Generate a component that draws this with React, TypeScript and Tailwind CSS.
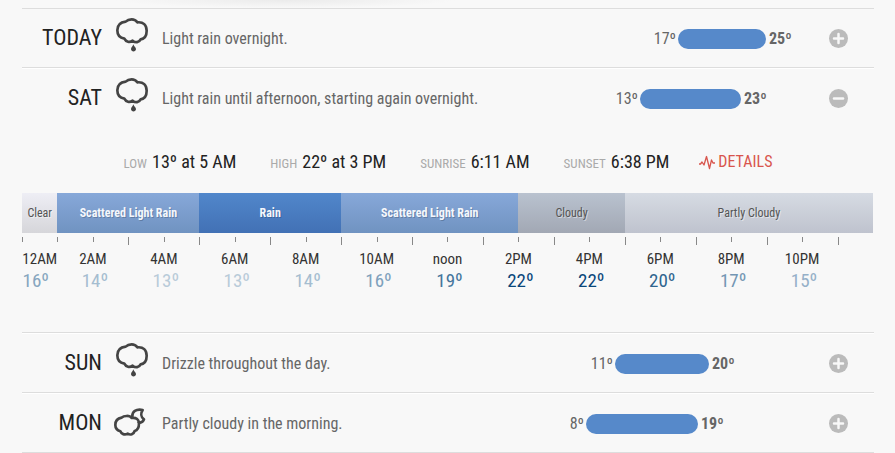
import { useState } from "react";

type Icon = "rain" | "partly-cloudy-night";

type Day = {
  name: string;
  icon: Icon;
  text: string;
  low: number;
  high: number;
  start: number;
  span: number;
};

const days: Day[] = [
  { name: "TODAY", icon: "rain", text: "Light rain overnight.", low: 17, high: 25, start: 118, span: 88 },
  { name: "SAT", icon: "rain", text: "Light rain until afternoon, starting again overnight.", low: 13, high: 23, start: 80, span: 101 },
  { name: "SUN", icon: "rain", text: "Drizzle throughout the day.", low: 11, high: 20, start: 55, span: 94 },
  { name: "MON", icon: "partly-cloudy-night", text: "Partly cloudy in the morning.", low: 8, high: 19, start: 26, span: 112 },
];

const facts = [
  { label: "LOW", value: "13º at 5 AM" },
  { label: "HIGH", value: "22º at 3 PM" },
  { label: "SUNRISE", value: "6:11 AM" },
  { label: "SUNSET", value: "6:38 PM" },
];

const darkText = "text-[#555] [text-shadow:1px_1px_0_rgba(255,255,255,0.5)]";
const lightText = "font-bold text-[#f4f7fc] [text-shadow:1px_1px_0_rgba(0,0,0,0.2)]";

const conditions = [
  { label: "Clear", style: `col-span-1 from-[#eeeef5] to-[#d6d6da] ${darkText}` },
  { label: "Scattered Light Rain", style: `col-span-4 from-[#87a8d9] to-[#7093c1] ${lightText}` },
  { label: "Rain", style: `col-span-4 from-[#5187cb] to-[#4271b5] ${lightText}` },
  { label: "Scattered Light Rain", style: `col-span-5 from-[#87a8d9] to-[#7093c1] ${lightText}` },
  { label: "Cloudy", style: `col-span-3 from-[#b9c2cf] to-[#a2a8b4] ${darkText}` },
  { label: "Partly Cloudy", style: `col-span-7 from-[#d6dbe3] to-[#bfc3ce] ${darkText}` },
];

const hours = [
  { time: "12AM", temp: 16, color: "text-[#86a6bf]" },
  { time: "2AM", temp: 14, color: "text-[#a5bdd0]" },
  { time: "4AM", temp: 13, color: "text-[#b8cbd9]" },
  { time: "6AM", temp: 13, color: "text-[#b8cbd9]" },
  { time: "8AM", temp: 14, color: "text-[#a5bdd0]" },
  { time: "10AM", temp: 16, color: "text-[#7fa1bc]" },
  { time: "noon", temp: 19, color: "text-[#44759c]" },
  { time: "2PM", temp: 22, color: "text-[#0a477b]" },
  { time: "4PM", temp: 22, color: "text-[#0a477b]" },
  { time: "6PM", temp: 20, color: "text-[#2f658f]" },
  { time: "8PM", temp: 17, color: "text-[#7396b3]" },
  { time: "10PM", temp: 15, color: "text-[#95b0c8]" },
];

function WeatherIcon({ icon }: { icon: Icon }) {
  if (icon === "rain") {
    return (
      <svg className="mb-2 ml-[11px] h-9 w-9 shrink-0" viewBox="24 36 108 108" fill="none" stroke="#444" strokeWidth="8" strokeLinejoin="round" aria-hidden="true">
        <path d="M62 50C67 45 73 43 80 43C87 43 93 46 97 52C115 50 125 60 125 77C125 91 118 101 107 103C103 113 91 114 83 107C74 114 63 111 58 101C44 99 37 90 37 76C37 61 46 52 62 50Z" />
        <path d="M85 118C84 124 78 127 78 132C78 142 93 142 93 132C93 127 86 124 85 118Z" fill="#444" stroke="none" />
      </svg>
    );
  }
  return (
    <svg className="mb-2 ml-[11px] h-9 w-9 shrink-0" viewBox="24 21 108 108" fill="none" stroke="#444" strokeWidth="8" strokeLinejoin="round" strokeLinecap="round" aria-hidden="true">
      <path d="M50 68C56 62 74 60 80 69C94 67 102 74 102 85C102 97 97 106 89 108C86 118 76 121 68 116C59 121 49 117 46 109C37 106 31 99 31 90C31 78 38 70 50 68Z" />
      <path d="M82 65C81 50 93 41 113 45C107 54 107 66 117 73C114 81 108 84 101 82" />
    </svg>
  );
}

function TemperatureRange({ day }: { day: Day }) {
  return (
    <div className="flex w-[248px] shrink-0 items-center text-base leading-5 text-[#666]">
      <span className="shrink-0 pr-0.5 text-right" style={{ width: day.start }}>{day.low}º</span>
      <span className="h-5 shrink-0 rounded-full bg-[#5689ca]" style={{ width: day.span }} />
      <span className="pl-[3px] font-bold">{day.high}º</span>
    </div>
  );
}

function DayDetails() {
  return (
    <div className="pt-[21px] pb-[41px]">
      <div className="mb-[17px] flex h-7 items-center justify-center gap-[34px] whitespace-nowrap">
        {facts.map((fact) => (
          <dl key={fact.label} className="flex items-baseline gap-[5px]">
            <dt className="text-[13px] text-[#aaa]">{fact.label}</dt>
            <dd className="text-lg text-[#222]">{fact.value}</dd>
          </dl>
        ))}
        <a href="#details" className="-ml-1 flex items-center gap-[3px] text-base text-[#d8554d]">
          <svg className="h-4 w-4" viewBox="0 0 16 16" fill="none" stroke="currentColor" strokeWidth="1.3" strokeLinejoin="round" aria-hidden="true">
            <path d="M0 10H1.500L3 8L5 11L7.500 2.500L10.500 14.500L12.500 6L14 9H16" />
          </svg>
          DETAILS
        </a>
      </div>
      <div className="mr-px">
        <div className="grid h-10 grid-cols-24 text-xs">
          {conditions.map((condition, i) => (
            <div key={i} className={`flex items-center justify-center whitespace-nowrap bg-linear-to-b ${condition.style}`}>
              {condition.label}
            </div>
          ))}
        </div>
        <div className="mt-1 grid h-2 grid-cols-24 items-start">
          {Array.from({ length: 24 }, (_, i) => (
            <span key={i} className={`border-l border-[#888] ${i > 1 && i % 2 === 1 ? "h-2" : "h-[5px]"}`} />
          ))}
        </div>
        <div className="mt-0.5 grid grid-cols-24">
          {hours.map((hour, i) => (
            <div key={hour.time} className={`text-center whitespace-nowrap ${i === 0 ? "col-span-1" : "col-span-2"}`}>
              <div className="text-[15px] leading-6 text-[#333]">{hour.time}</div>
              <div className={`text-[19px] leading-5 ${i === 0 ? "pr-2" : "pl-1"} ${hour.color}`}>{hour.temp}º</div>
            </div>
          ))}
        </div>
      </div>
    </div>
  );
}

export default function App() {
  const [open, setOpen] = useState("SAT");
  return (
    <main className="overflow-hidden bg-[#f8f8f8] font-['Roboto_Condensed',Roboto,sans-serif]">
      <div className="h-2 bg-[radial-gradient(170px_8px_at_285px_0,#ebebeb,#f8f8f8)]" />
      <ul className="mr-[21px] ml-[22px] border-t border-[#ddd]">
        {days.map((day, i) => (
          <li key={day.name} className={`border-b border-b-[#ddd] ${i > 0 ? "border-t border-t-white" : ""}`}>
            <div className="flex h-[58px] items-center pt-0.5">
              <h2 className="w-20 shrink-0 pb-0.5 text-right text-[22px] leading-7 text-[#222]">{day.name}</h2>
              <WeatherIcon icon={day.icon} />
              <p className="ml-[13px] flex-1 whitespace-nowrap text-base leading-6 text-[#666]">{day.text}</p>
              <TemperatureRange day={day} />
              <button
                type="button"
                className="mr-[26px] mb-px ml-[21px] flex size-[19px] shrink-0 items-center justify-center rounded-full bg-[#bbb]"
                aria-label={open === day.name ? `Hide ${day.name} details` : `Show ${day.name} details`}
                aria-expanded={open === day.name}
                onClick={() => setOpen(open === day.name ? "" : day.name)}
              >
                <svg className="size-[19px]" viewBox="0 0 19 19" stroke="#f8f8f8" strokeWidth="2.500" strokeLinecap="round" aria-hidden="true">
                  <path d={open === day.name ? "M5 9.500H14" : "M5 9.500H14M9.500 5V14"} />
                </svg>
              </button>
            </div>
            {open === day.name && <DayDetails />}
          </li>
        ))}
      </ul>
    </main>
  );
}
